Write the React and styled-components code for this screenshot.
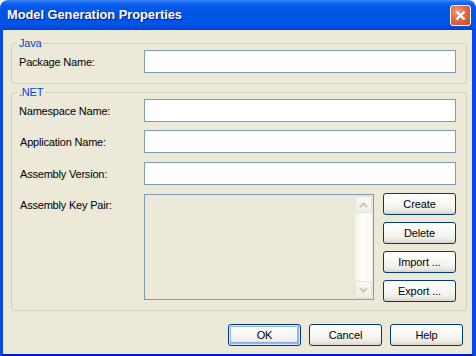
import React from 'react';
import styled, { createGlobalStyle, css } from 'styled-components';

const xp = {
  face: '#ECE9D8',
  frame: '#0A46E0',
  frameDark: '#0019CF',
  group: '#D0D0BF',
  legend: '#0046D5',
  field: '#7F9DB9',
  btnBorder: '#003C74',
  font: '"Liberation Sans", Arial, sans-serif',
};

const GlobalStyle = createGlobalStyle`
  html, body {
    margin: 0;
    padding: 0;
    background: #ffffff;
  }
  * {
    box-sizing: border-box;
  }
`;

const Window = styled.div`
  width: 476px;
  height: 356px;
  display: flex;
  flex-direction: column;
  border-radius: 8px 8px 0 0;
  overflow: hidden;
  font-family: ${xp.font};
`;

const TitleBar = styled.div`
  height: 30px;
  flex: none;
  display: flex;
  align-items: center;
  justify-content: space-between;
  padding: 0 5px 1px 7px;
  background: linear-gradient(
    180deg,
    #3C8CF7 0%,
    #1A6AF3 8%,
    #0558E8 20%,
    #0054E3 50%,
    #0055E8 80%,
    #0049D8 94%,
    #003FC8 100%
  );
`;

const Title = styled.span`
  color: #fff;
  font-weight: bold;
  font-size: 12.8px;
  text-shadow: 1px 1px 0 #0A1883;
`;

const CloseButton = styled.div`
  width: 21px;
  height: 21px;
  margin-top: 2px;
  border: 1px solid #fff;
  border-radius: 3px;
  background: radial-gradient(circle at 35% 30%, #F19A7E 0%, #E06A48 45%, #D0451F 100%);
  display: flex;
  align-items: center;
  justify-content: center;
`;

const Body = styled.div`
  flex: 1;
  display: flex;
  flex-direction: column;
  background: ${xp.face};
  border-left: 3px solid ${xp.frame};
  border-right: 4px solid ${xp.frame};
  border-bottom: 4px solid ${xp.frameDark};
  padding: 7px 5px 8px 8px;
  font-size: 11px;
  letter-spacing: -0.2px;
  color: #000;
`;

const Group = styled.fieldset`
  margin: ${p => (p.$first ? '0' : '2px 0 0')};
  padding: 0 10px ${p => (p.$first ? '10px' : '8px')} 7px;
  min-width: 0;
  border: 1px solid ${xp.group};
  border-radius: 3px;
  display: flex;
  flex-direction: column;
  gap: 8px;
`;

const Legend = styled.legend`
  color: ${xp.legend};
  font-size: 11px;
  line-height: 13px;
  padding: 0 2px;
  margin-left: -2px;
`;

const Row = styled.div`
  display: grid;
  grid-template-columns: 125px 1fr;
  align-items: ${p => (p.$top ? 'start' : 'center')};
  margin-top: ${p => (p.$nudge ? '1px' : '0')};
`;

const Label = styled.label`
  line-height: 13px;
  padding-top: ${p => (p.$top ? '6px' : '1px')};
  padding-left: ${p => (p.$indent ? '1px' : '0')};
`;

const TextBox = styled.div`
  height: 23px;
  border: 1px solid ${xp.field};
  background: #fff;
`;

const KeyWrap = styled.div`
  display: flex;
  gap: 9px;
  align-items: flex-start;
`;

const KeyArea = styled.div`
  flex: 1;
  height: 106px;
  margin-top: 1px;
  border: 1px solid ${xp.field};
  background: ${xp.face};
  display: flex;
  justify-content: flex-end;
  padding: 1px 1px 1px 0;
`;

const ScrollBar = styled.div`
  width: 17px;
  display: flex;
  flex-direction: column;
  background: linear-gradient(90deg, #F3F1EA 0%, #FEFEFB 40%, #FAF9F4 100%);
`;

const ScrollTrack = styled.div`
  flex: 1;
`;

const ScrollBtn = styled.div`
  height: 17px;
  border: 1px solid #E3E1D6;
  border-radius: 2px;
  background: linear-gradient(180deg, #FAF9F5 0%, #EFEEE7 100%);
  display: flex;
  align-items: center;
  justify-content: center;
`;

const SideButtons = styled.div`
  width: 73px;
  display: flex;
  flex-direction: column;
  gap: 7px;
`;

const buttonBase = css`
  height: 22px;
  border: 1px solid ${xp.btnBorder};
  border-radius: 3px;
  font-family: ${xp.font};
  font-size: 11px;
  letter-spacing: -0.1px;
  color: #000;
  padding: 0;
  background: linear-gradient(
    180deg,
    #FFFFFF 0%,
    #FBFBF9 30%,
    #F2F1EC 70%,
    #E6E3D9 90%,
    #D6D0C5 100%
  );
`;

const Button = styled.button`
  ${buttonBase};
  width: 73px;
  box-shadow: ${p =>
    p.$default
      ? 'inset 0 0 0 1px #CEE7FF, inset 0 0 0 2px #98B8EA, inset -2px -2px 0 1px #89ADE4'
      : 'none'};
`;

const Footer = styled.div`
  display: flex;
  justify-content: flex-end;
  gap: 8px;
  margin-top: 13px;
  padding-right: 4px;
`;

function Chevron({ up }) {
  return (
    <svg width="9" height="6" viewBox="0 0 9 6">
      <path
        d={up ? 'M1 5 L4.5 1.5 L8 5' : 'M1 1 L4.5 4.5 L8 1'}
        fill="none"
        stroke="#C8C6B8"
        strokeWidth="2"
      />
    </svg>
  );
}

function App() {
  return (
    <>
      <GlobalStyle />
      <Window>
        <TitleBar>
          <Title>Model Generation Properties</Title>
          <CloseButton>
            <svg width="11" height="11" viewBox="0 0 11 11">
              <path d="M1.5 1.5 L9.5 9.5 M9.5 1.5 L1.5 9.5" stroke="#fff" strokeWidth="2.4" />
            </svg>
          </CloseButton>
        </TitleBar>
        <Body>
          <Group $first>
            <Legend>Java</Legend>
            <Row>
              <Label>Package Name:</Label>
              <TextBox />
            </Row>
          </Group>
          <Group>
            <Legend>.NET</Legend>
            <Row>
              <Label>Namespace Name:</Label>
              <TextBox />
            </Row>
            <Row>
              <Label $indent>Application Name:</Label>
              <TextBox />
            </Row>
            <Row $nudge>
              <Label $indent>Assembly Version:</Label>
              <TextBox />
            </Row>
            <Row $top>
              <Label $top $indent>Assembly Key Pair:</Label>
              <KeyWrap>
                <KeyArea>
                  <ScrollBar>
                    <ScrollBtn>
                      <Chevron up />
                    </ScrollBtn>
                    <ScrollTrack />
                    <ScrollBtn>
                      <Chevron />
                    </ScrollBtn>
                  </ScrollBar>
                </KeyArea>
                <SideButtons>
                  <Button>Create</Button>
                  <Button>Delete</Button>
                  <Button>Import ...</Button>
                  <Button>Export ...</Button>
                </SideButtons>
              </KeyWrap>
            </Row>
          </Group>
          <Footer>
            <Button $default>OK</Button>
            <Button>Cancel</Button>
            <Button>Help</Button>
          </Footer>
        </Body>
      </Window>
    </>
  );
}

export default App;
